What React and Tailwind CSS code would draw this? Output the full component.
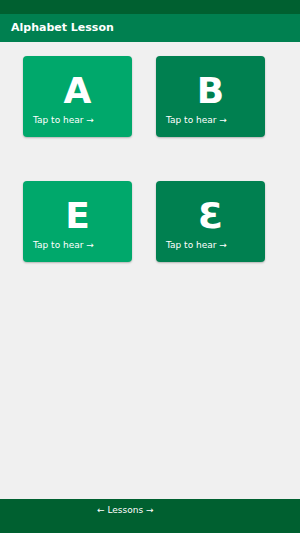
import React from 'react';

const letters = [
  { ch: 'A', tone: 'bg-[#00a86b]' },
  { ch: 'B', tone: 'bg-[#008050]' },
  { ch: 'E', tone: 'bg-[#00a86b]' },
  { ch: 'Ɛ', tone: 'bg-[#008050]' },
];

function LetterCard({ ch, tone }) {
  return (
    <div className={`w-[109px] h-[81px] rounded-[4px] ${tone} shadow-[0_1px_2px_rgba(0,0,0,0.25)] flex flex-col pt-[17px] text-white`}>
      <div className="text-center text-[36px] leading-[36px] font-bold">{ch}</div>
      <div className="pl-[10px] mt-[5px] text-[9px] leading-[12px]">Tap to hear →</div>
    </div>
  );
}

export default function App() {
  return (
    <div className="h-[533px] w-[300px] flex flex-col bg-[#f0f0f0] font-['DejaVu_Sans',sans-serif]">
      <div className="h-[14px] bg-[#006030]" />
      <div className="h-[28px] bg-[#008050] flex items-center pl-[11px]">
        <h1 className="text-white text-[11px] leading-[14px] font-bold">Alphabet Lesson</h1>
      </div>

      <div className="flex-1 pt-[14px] pl-[23px] grid grid-cols-[109px_109px] gap-x-[24px] gap-y-[44px] content-start">
        {letters.map(l => <LetterCard key={l.ch} {...l} />)}
      </div>

      <div className="h-[34px] bg-[#006030] pl-[97px] pt-[5px] text-white text-[9px] leading-[12px]">
        ← Lessons →
      </div>
    </div>
  );
}
